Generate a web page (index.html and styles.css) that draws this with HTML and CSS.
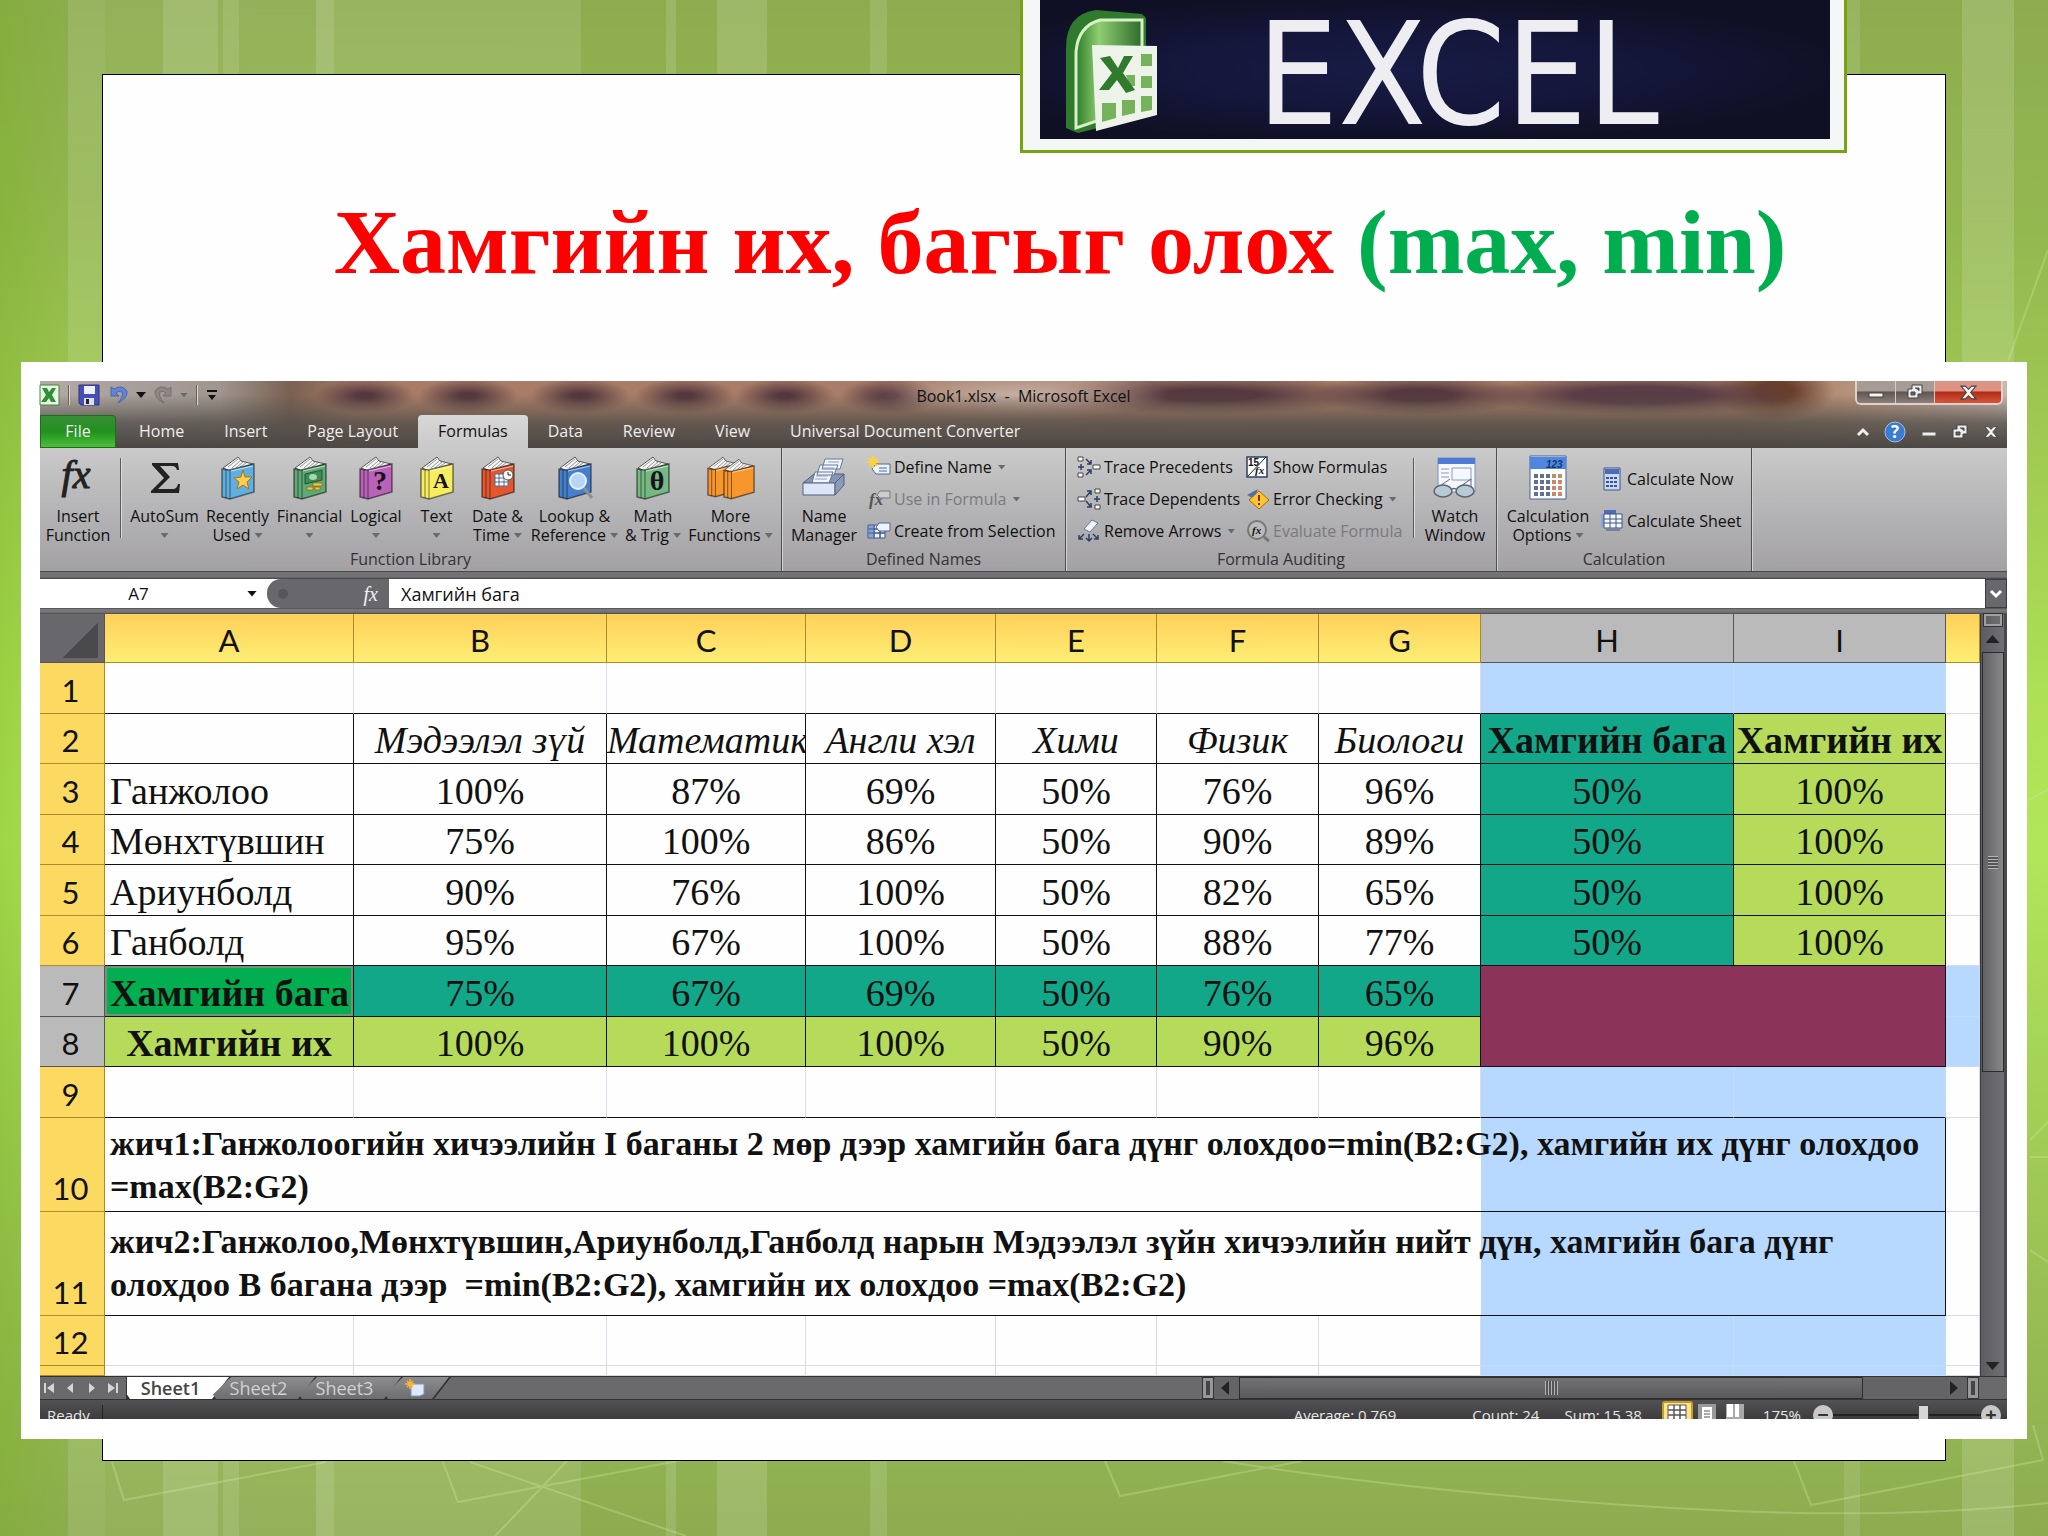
FILE: index.html
```html
<!DOCTYPE html>
<html lang="mn">
<head>
<meta charset="utf-8">
<meta name="viewport" content="width=device-width, initial-scale=1">
<title>Хамгийн их, багыг олох (max, min)</title>
<link rel="stylesheet" href="styles.css">
</head>
<body>
<svg class="defs" aria-hidden="true">
  <symbol id="book" viewBox="0 0 34 44">
    <path d="M2 12 L17 1 L20 5 L32 8 L9 15 Z" fill="#f4f4f4" stroke="#555" stroke-width="1"/>
    <path d="M7 11 L17 3 M11 12 L19 5 M15 12 L22 6 M19 11 L25 7" stroke="#999" stroke-width="1" fill="none"/>
    <path d="M1 13 L8 14 L33 8 V36 L9 43 L1 41 Z" fill="currentColor" stroke="rgba(0,0,0,.5)" stroke-width="1.5"/>
    <path d="M5 14 V42 M9 14 V43" stroke="rgba(0,0,0,.5)" stroke-width="1"/>
    <path d="M10 15 L32 10" stroke="rgba(255,255,255,.6)" stroke-width="1"/>
  </symbol>
  <symbol id="restore" viewBox="0 0 16 16">
    <path d="M5 1 H15 V10 H11 V14 H1 V5 H5 Z" fill="#eee" stroke="#444"/>
    <path d="M4 8 H8 V11 H4 Z M8 4 H12 V7" fill="#666" stroke="#444"/>
  </symbol>
  <symbol id="cross" viewBox="0 0 16 16">
    <path d="M1 2 H5 L8 5 L11 2 H15 L10 8 L15 14 H11 L8 11 L5 14 H1 L6 8 Z" fill="#f4f4f4" stroke="#444"/>
  </symbol>
</svg>

<main class="slide">
  <svg class="lines" viewBox="0 0 2048 1536" preserveAspectRatio="none" aria-hidden="true">
    <path d="M112 1462 L124 1500 L326 1462 M443 1462 L458 1502 L683 1460 M470 1462 L686 1536 M567 1461 L495 1536 M1105 1461 L1120 1496 L1302 1461 M1223 1461 Q1400 1490 1640 1506 T2048 1503 M1794 1461 L1811 1505 L2043 1460 L2033 1425 M2030 1140 L2048 1122 M2030 1157 H2048 M2030 1250 L2048 1262 M2008 361 L2048 250 M2028 800 L2048 790"/>
  </svg>

  <section class="paper">
    <h1 class="title">Хамгийн их, багыг олох <span class="title-fn">(max, min)</span></h1>

    <div class="frame">
      <div class="excel">
        <header class="chrome">
          <div class="titlebar">
            <div class="quick">
              <svg width="20" height="22" viewBox="0 0 20 22"><path d="M0 1 H19 V21 H0 Z" fill="#e9f4e6" stroke="#3c8a3a"/><path d="M2 4 H7 L9 8 L12 4 H16 L12 11 L16 18 H11 L9 14 L6 18 H1 L6 11 Z" fill="#2f8f34"/></svg>
              <i class="bar"></i>
              <svg width="22" height="22" viewBox="0 0 22 22"><path d="M1 1 H21 V21 H3 L1 19 Z" fill="#4450b8" stroke="#2c3580"/><path d="M6 2 H17 V10 H6 Z" fill="#eef"/><path d="M6 14 H16 V21 H6 Z" fill="#dde"/><path d="M8 15 H11 V20 H8 Z" fill="#223"/></svg>
              <svg width="20" height="20" viewBox="-2 0 20 20"><path d="M1 2 V11 H9 L6 8 Q9 5 12 7 Q14 11 8 18 Q18 13 17 6 Q12 -1 4 4 Z" fill="#5f86d4" stroke="#3a5aa8" stroke-width=".8"/></svg>
              <i class="caret caret-dark"></i>
              <svg width="18" height="20" viewBox="0 0 18 20"><path d="M17 2 V11 H9 L12 8 Q9 5 6 7 Q4 11 10 18 Q0 13 1 6 Q6 -1 14 4 Z" fill="#8d8683" stroke="#6d6663" stroke-width=".8"/></svg>
              <i class="caret"></i>
              <i class="bar"></i>
              <svg width="12" height="12" viewBox="0 0 12 12"><path d="M1 1 H11 V3 H1 Z M2 6 H10 L6 11 Z" fill="#111"/></svg>
            </div>
            <p class="doc">Book1.xlsx &nbsp;- &nbsp;Microsoft Excel</p>
            <div class="winbtns">
              <button class="win" aria-label="Minimize"><svg width="16" height="16" viewBox="0 0 16 16"><path d="M1 9 H15 V13 H1 Z" fill="#f4f4f4" stroke="#444"/></svg></button>
              <button class="win" aria-label="Restore"><svg width="16" height="18"><use href="#restore"/></svg></button>
              <button class="win win-close" aria-label="Close"><svg width="17" height="17"><use href="#cross"/></svg></button>
            </div>
          </div>
          <nav class="tabs">
            <button class="tab tab-file">File</button>
            <button class="tab">Home</button>
            <button class="tab">Insert</button>
            <button class="tab">Page Layout</button>
            <button class="tab tab-on">Formulas</button>
            <button class="tab">Data</button>
            <button class="tab">Review</button>
            <button class="tab">View</button>
            <button class="tab">Universal Document Converter</button>
            <div class="tabtools">
              <svg width="12" height="10" viewBox="0 0 12 10"><path d="M1 8 L6 3 L11 8" fill="none" stroke="#eee" stroke-width="3"/></svg>
              <svg width="22" height="22" viewBox="0 0 22 22"><circle cx="11" cy="11" r="10" fill="#3b7bd0" stroke="#9cc0ee"/><text x="11" y="17" class="qmark">?</text></svg>
              <svg width="16" height="16" viewBox="0 0 16 16"><path d="M1 8 H15 V12 H1 Z" fill="#eee" stroke="#555"/></svg>
              <svg width="16" height="16"><use href="#restore"/></svg>
              <svg width="16" height="14"><use href="#cross"/></svg>
            </div>
          </nav>
        </header>

        <div class="ribbon">
          <section class="group">
            <div class="tools tools-library">
              <button class="tool"><svg width="44" height="44" viewBox="0 0 44 44"><text x="20" y="32" class="fx-big">fx</text></svg><span>Insert<br>Function</span></button>
              <i class="divider"></i>
              <button class="tool"><svg width="44" height="44" viewBox="0 0 44 44"><path d="M9 7 H35 L36 14 H34 Q33 10 29 10 H17 L27 21 L15 33 H30 Q34 33 35 28 H37 L36 37 H8 V35 L21 22 L9 9 Z" fill="#222"/></svg><span>AutoSum<br><i class="caret"></i></span></button>
              <button class="tool c-blue"><svg width="44" height="44" viewBox="-5 0 44 44"><use href="#book" width="34" height="44"/><path d="M22 14 L24 21 L31 21 L26 26 L28 33 L22 29 L16 33 L18 26 L13 22 L20 21 Z" fill="#ffcf4a" stroke="#a8741a"/></svg><span>Recently<br>Used <i class="caret"></i></span></button>
              <button class="tool c-green"><svg width="44" height="44" viewBox="-5 0 44 44"><use href="#book" width="34" height="44"/><path d="M12 18 L29 14 V24 L12 28 Z" fill="#3f8a55" stroke="#1f5b33"/><ellipse cx="20" cy="21" rx="4" ry="3" fill="#a5d8ac"/><path d="M20 27 H29 V30 H20 Z M14 31 H20 V34 H14 Z M22 31 H27 V34 H22 Z" fill="#f3c545" stroke="#8a6414" stroke-width=".7"/></svg><span>Financial<br><i class="caret"></i></span></button>
              <button class="tool c-purple"><svg width="44" height="44" viewBox="-5 0 44 44"><use href="#book" width="34" height="44"/><text x="21" y="34" class="glyph">?</text></svg><span>Logical<br><i class="caret"></i></span></button>
              <button class="tool c-yellow"><svg width="44" height="44" viewBox="-5 0 44 44"><use href="#book" width="34" height="44"/><text x="21" y="32" class="glyph glyph-sm">A</text></svg><span>Text<br><i class="caret"></i></span></button>
              <button class="tool c-red"><svg width="44" height="44" viewBox="-5 0 44 44"><use href="#book" width="34" height="44"/><path d="M14 18 H27 V30 H14 Z" fill="#fff" stroke="#4a6ba8"/><path d="M14 22 H27 M14 26 H27 M18 18 V30 M23 18 V30" stroke="#4a6ba8"/><circle cx="27" cy="19" r="5" fill="#fff" stroke="#555"/><path d="M27 16 V19 H30" stroke="#222" fill="none"/></svg><span>Date &amp;<br>Time <i class="caret"></i></span></button>
              <button class="tool c-navy"><svg width="44" height="44" viewBox="-5 0 44 44"><use href="#book" width="34" height="44"/><circle cx="20" cy="25" r="8" fill="#b9d5f6" stroke="#e6eefb" stroke-width="2"/><path d="M26 32 L34 42" stroke="#8a8f9a" stroke-width="3"/></svg><span>Lookup &amp;<br>Reference <i class="caret"></i></span></button>
              <button class="tool c-leaf"><svg width="44" height="44" viewBox="-5 0 44 44"><use href="#book" width="34" height="44"/><text x="21" y="34" class="glyph">θ</text></svg><span>Math<br>&amp; Trig <i class="caret"></i></span></button>
              <button class="tool c-orange"><svg width="48" height="44" viewBox="0 0 48 44"><use href="#book" width="32" height="42"/><use href="#book" x="16" y="2" width="32" height="42"/></svg><span>More<br>Functions <i class="caret"></i></span></button>
            </div>
            <h2 class="caption">Function Library</h2>
          </section>

          <section class="group">
            <div class="tools tools-names">
              <button class="tool"><svg width="44" height="44" viewBox="0 0 44 44"><path d="M1 27 L12 18 H42 L33 29 Z" fill="#8595b5" stroke="#51607f"/><path d="M23 3 H41 L38 13 H20 Z M18 9 H36 L32 19 H15 Z M13 16 H31 L27 27 H10 Z" fill="#f3f7ff" stroke="#6478a0"/><path d="M14 20 H26 M13 23 H25 M26 6 H37 M21 12 H32" stroke="#8a9cc0"/><path d="M1 27 H33 V39 H1 Z" fill="#dbe6f8" stroke="#51607f"/><path d="M33 27 L42 18 V29 L33 39 Z" fill="#8a9ab8" stroke="#51607f"/></svg><span>Name<br>Manager</span></button>
              <div class="stack">
                <button class="item"><svg width="24" height="22" viewBox="0 0 24 22"><path d="M9 8 H23 V18 H9 L5 13 Z" fill="#eef4ff" stroke="#53678f"/><path d="M12 12 H20 M12 15 H20" stroke="#53678f"/><path d="M6 0 V12 M0 6 H12 M2 2 L10 10 M10 2 L2 10" stroke="#ffd23c" stroke-width="2"/></svg>Define Name <i class="caret"></i></button>
                <button class="item item-off"><svg width="24" height="22" viewBox="0 0 24 22"><text x="2" y="17" class="fx-small">fx</text><path d="M13 3 H23 V10 H13 L10 7 Z" fill="#ccc" stroke="#777"/></svg>Use in Formula <i class="caret"></i></button>
                <button class="item"><svg width="24" height="22" viewBox="0 0 24 22"><path d="M1 5 H18 V18 H1 Z" fill="#eef4ff" stroke="#3d5488"/><path d="M1 9 H18 M1 13 H18 M7 5 V18 M13 5 V18" stroke="#3d5488" stroke-width="1.5"/><path d="M1 5 H7 V18 H1 Z" fill="#5f7fbd" opacity=".7"/><path d="M12 3 H23 V11 H12 L9 7 Z" fill="#eef4ff" stroke="#53678f"/></svg>Create from Selection</button>
              </div>
            </div>
            <h2 class="caption">Defined Names</h2>
          </section>

          <section class="group">
            <div class="tools tools-audit">
              <div class="stack">
                <button class="item"><svg width="24" height="22" viewBox="0 0 24 22"><path d="M1 1 H6 V5 H1 Z M1 17 H6 V21 H1 Z M16 9 H23 V13 H16 Z" fill="#fff" stroke="#444"/><path d="M4 8 V14 M1 11 H7 M9 3 L14 8 M14 4 V8 H10 M9 19 L14 14 M10 14 H14 V18" stroke="#2d3f66" stroke-width="1.5" fill="none"/></svg>Trace Precedents</button>
                <button class="item"><svg width="24" height="22" viewBox="0 0 24 22"><path d="M18 1 H23 V5 H18 Z M18 17 H23 V21 H18 Z M1 9 H8 V13 H1 Z" fill="#fff" stroke="#444"/><path d="M20 8 V14 M17 11 H23 M9 9 L14 3 M10 3 H14 V7 M9 13 L14 19 M14 15 V19 H10" stroke="#2d3f66" stroke-width="1.5" fill="none"/></svg>Trace Dependents</button>
                <button class="item"><svg width="24" height="22" viewBox="0 0 24 22"><path d="M7 9 L15 0 L21 3 L13 12 Z" fill="#f4f6ff" stroke="#68759a"/><path d="M7 14 L2 19 M2 15 V19 H6 M12 14 V21 M9 18 L12 21 L15 18 M16 14 L21 19 M17 19 H21 V15" stroke="#2d3f66" stroke-width="1.5" fill="none"/></svg>Remove Arrows <i class="caret"></i></button>
              </div>
              <div class="stack">
                <button class="item"><svg width="24" height="22" viewBox="0 0 24 22"><path d="M1 1 H21 V21 H1 Z" fill="#fff" stroke="#2d3f66" stroke-width="1.5"/><text x="2" y="10" class="mini">15</text><path d="M2 20 L20 1" stroke="#222"/><text x="9" y="18" class="mini mini-fx">fx</text></svg>Show Formulas</button>
                <button class="item"><svg width="24" height="22" viewBox="0 0 24 22"><path d="M1 7 L12 1 L8 11 Z" fill="#4c6cb8"/><path d="M13 3 L23 12 L13 21 L3 12 Z" fill="#ffc52e" stroke="#a06c10"/><path d="M12 7 H14 V13 H12 Z M12 15 H14 V17 H12 Z" fill="#7a2c00"/></svg>Error Checking <i class="caret"></i></button>
                <button class="item item-off"><svg width="24" height="22" viewBox="0 0 24 22"><circle cx="11" cy="10" r="9" fill="#bbb" stroke="#777" stroke-width="2"/><text x="6" y="14" class="mini mini-fx">fx</text><path d="M18 17 L23 21" stroke="#777" stroke-width="3"/></svg>Evaluate Formula</button>
              </div>
              <i class="divider"></i>
              <button class="tool"><svg width="44" height="44" viewBox="0 0 44 44"><path d="M5 2 H42 V36 H5 Z" fill="#f5f9ff" stroke="#7a90bb"/><path d="M5 2 H42 V8 H5 Z" fill="#4d7bd6"/><path d="M8 13 H16 M8 17 H16 M8 21 H16 M19 12 H38 V24 H19 Z" stroke="#8a9ab8" fill="none"/><path d="M4 32 L17 23 M25 32 L38 23 V32" stroke="#667" fill="none"/><ellipse cx="10" cy="35" rx="9" ry="6" fill="#b7cbd6" stroke="#59656f" stroke-width="1.5"/><ellipse cx="32" cy="35" rx="9" ry="6" fill="#b7cbd6" stroke="#59656f" stroke-width="1.5"/><path d="M18 34 Q21 31 24 34" stroke="#59656f" stroke-width="1.5" fill="none"/></svg><span>Watch<br>Window</span></button>
            </div>
            <h2 class="caption">Formula Auditing</h2>
          </section>

          <section class="group">
            <div class="tools tools-calc">
              <button class="tool"><svg width="44" height="44" viewBox="0 0 44 44"><path d="M4 0 H40 V43 H4 Z" fill="#fbfcff" stroke="#44639f"/><path d="M4 1 H40 V13 H4 Z" fill="#4f86df"/><text x="20" y="12" class="mini mini-lcd">123</text><path d="M8 20 H25 M8 26 H25 M8 32 H25 M8 38 H25" stroke="#63708c" stroke-width="4" stroke-dasharray="4 2"/><path d="M26 20 H37 M26 26 H37 M26 32 H37 M26 38 H37" stroke="#c98a68" stroke-width="4" stroke-dasharray="4 2"/></svg><span>Calculation<br>Options <i class="caret"></i></span></button>
              <div class="stack stack-two">
                <button class="item"><svg width="24" height="24" viewBox="0 0 24 24"><path d="M4 1 H20 V23 H4 Z" fill="#c9d8f4" stroke="#3d5488"/><path d="M5 2 H19 V7 H5 Z" fill="#4c6cb8"/><path d="M6 11 H18 M6 15 H18 M6 19 H18" stroke="#3d5488" stroke-width="2" stroke-dasharray="3 1"/></svg>Calculate Now</button>
                <button class="item"><svg width="24" height="24" viewBox="0 0 24 24"><path d="M4 1 H16 V6 H4 Z" fill="#4c6cb8"/><path d="M1 5 H5 V18 H1 Z" fill="#8aa4d6"/><path d="M4 5 H22 V19 H4 Z" fill="#f5f9ff" stroke="#3d5488"/><path d="M4 10 H22 M4 14 H22 M10 5 V19 M16 5 V19 M6 21 H20" stroke="#3d5488"/></svg>Calculate Sheet</button>
              </div>
            </div>
            <h2 class="caption">Calculation</h2>
          </section>
        </div>

        <div class="formula">
          <div class="namewrap">
            <input class="namebox" aria-label="Name Box" value="A7">
            <i class="caret caret-dark"></i>
          </div>
          <div class="fxzone"><i class="knob"></i><span class="fx">fx</span></div>
          <input class="fxinput" aria-label="Formula Bar" value="Хамгийн бага">
          <button class="expand" aria-label="Expand Formula Bar"><svg width="14" height="10" viewBox="0 0 14 10"><path d="M2 2 L7 7 L12 2" fill="none" stroke="#fff" stroke-width="3"/></svg></button>
        </div>

        <div class="work">
          <table class="grid">
            <colgroup><col class="w-n"><col class="w-a"><col class="w-b"><col class="w-c"><col class="w-d"><col class="w-e"><col class="w-f"><col class="w-g"><col class="w-h"><col class="w-i"><col></colgroup>
            <thead>
              <tr><th class="corner"></th><th>A</th><th>B</th><th>C</th><th>D</th><th>E</th><th>F</th><th>G</th><th class="sel">H</th><th class="sel">I</th><th></th></tr>
            </thead>
            <tbody>
              <tr class="above"><th>1</th><td></td><td></td><td></td><td></td><td></td><td></td><td></td><td class="pick"></td><td class="pick"></td><td></td></tr>
              <tr class="box names"><th>2</th><td></td><td>Мэдээлэл зүй</td><td>Математик</td><td>Англи хэл</td><td>Хими</td><td>Физик</td><td>Биологи</td><td class="low head">Хамгийн бага</td><td class="high head">Хамгийн их</td><td></td></tr>
              <tr class="box"><th>3</th><td>Ганжолоо</td><td>100%</td><td>87%</td><td>69%</td><td>50%</td><td>76%</td><td>96%</td><td class="low">50%</td><td class="high">100%</td><td></td></tr>
              <tr class="box"><th>4</th><td>Мөнхтүвшин</td><td>75%</td><td>100%</td><td>86%</td><td>50%</td><td>90%</td><td>89%</td><td class="low">50%</td><td class="high">100%</td><td></td></tr>
              <tr class="box"><th>5</th><td>Ариунболд</td><td>90%</td><td>76%</td><td>100%</td><td>50%</td><td>82%</td><td>65%</td><td class="low">50%</td><td class="high">100%</td><td></td></tr>
              <tr class="box"><th>6</th><td>Ганболд</td><td>95%</td><td>67%</td><td>100%</td><td>50%</td><td>88%</td><td>77%</td><td class="low">50%</td><td class="high">100%</td><td></td></tr>
              <tr class="box"><th class="sel">7</th><td class="active">Хамгийн бага</td><td class="low">75%</td><td class="low">67%</td><td class="low">69%</td><td class="low">50%</td><td class="low">76%</td><td class="low">65%</td><td class="merged" colspan="2" rowspan="2"></td><td class="pick"></td></tr>
              <tr class="box"><th class="sel">8</th><td class="high head total">Хамгийн их</td><td class="high">100%</td><td class="high">100%</td><td class="high">100%</td><td class="high">50%</td><td class="high">90%</td><td class="high">96%</td><td class="pick"></td></tr>
              <tr class="above"><th>9</th><td></td><td></td><td></td><td></td><td></td><td></td><td></td><td class="pick"></td><td class="pick"></td><td></td></tr>
              <tr class="note"><th>10</th><td colspan="9">жич1:Ганжолоогийн хичээлийн I баганы 2 мөр дээр хамгийн бага дүнг олохдоо=min(B2:G2), хамгийн их дүнг олохдоо =max(B2:G2)</td><td></td></tr>
              <tr class="note note-tall"><th>11</th><td colspan="9">жич2:Ганжолоо,Мөнхтүвшин,Ариунболд,Ганболд нарын Мэдээлэл зүйн хичээлийн нийт дүн, хамгийн бага дүнг<br>олохдоо B багана дээр &nbsp;=min(B2:G2), хамгийн их олохдоо =max(B2:G2)</td><td></td></tr>
              <tr><th>12</th><td></td><td></td><td></td><td></td><td></td><td></td><td></td><td class="pick"></td><td class="pick"></td><td></td></tr>
              <tr class="sliver"><th></th><td></td><td></td><td></td><td></td><td></td><td></td><td></td><td class="pick"></td><td class="pick"></td><td></td></tr>
            </tbody>
          </table>
          <div class="vscroll">
            <i class="split"></i>
            <i class="arrow arrow-up"></i>
            <div class="vthumb"><i class="grip"></i></div>
            <i class="arrow arrow-down"></i>
          </div>
        </div>

        <div class="sheets">
          <div class="sheetnav">
            <svg width="12" height="12" viewBox="0 0 12 12"><path d="M1 1 H3 V11 H1 Z M11 1 V11 L4 6 Z"/></svg>
            <svg width="12" height="12" viewBox="0 0 12 12"><path d="M9 1 V11 L3 6 Z"/></svg>
            <svg width="12" height="12" viewBox="0 0 12 12"><path d="M3 1 V11 L9 6 Z"/></svg>
            <svg width="12" height="12" viewBox="0 0 12 12"><path d="M1 1 V11 L8 6 Z M9 1 H11 V11 H9 Z"/></svg>
          </div>
          <div class="tabstrip">
            <button class="sheet sheet-on">Sheet1</button>
            <button class="sheet">Sheet2</button>
            <button class="sheet">Sheet3</button>
            <button class="sheet sheet-new" aria-label="Insert Worksheet"><svg width="20" height="18" viewBox="0 0 20 18"><path d="M6 5 H19 V15 L15 17 H6 Z" fill="#dfe9fb" stroke="#7d93c0"/><path d="M5 0 V10 M0 5 H10 M2 2 L8 8 M8 2 L2 8" stroke="#ffb52c" stroke-width="1.5"/></svg></button>
          </div>
          <div class="hscroll">
            <i class="hsplit"></i>
            <i class="arrow arrow-left"></i>
            <div class="hthumb"><i class="grip grip-h"></i></div>
            <i class="arrow arrow-right"></i>
            <i class="hsplit"></i>
          </div>
        </div>

        <footer class="status">
          <div class="statusrow">
            <span class="ready">Ready</span>
            <span class="average">Average: 0.769</span>
            <span class="count">Count: 24</span>
            <span class="sum">Sum: 15.38</span>
            <button class="view view-on" aria-label="Normal"><svg width="20" height="22" viewBox="0 0 20 22"><path d="M1 1 H19 V21 H1 Z" fill="#fff" stroke="#555"/><path d="M1 6 H19 M1 11 H19 M1 16 H19 M7 1 V21 M13 1 V21" stroke="#555" stroke-width="1.5"/></svg></button>
            <button class="view" aria-label="Page Layout"><svg width="18" height="22" viewBox="0 0 18 22"><path d="M0 0 H18 V22 H0 Z" fill="#999"/><path d="M4 3 H14 V21 H4 Z" fill="#fff"/><path d="M6 7 H12 M6 10 H12 M6 13 H12" stroke="#555"/></svg></button>
            <button class="view" aria-label="Page Break Preview"><svg width="18" height="22" viewBox="0 0 18 22"><path d="M0 0 H18 V22 H0 Z" fill="#aaa"/><path d="M1 0 H7 V13 H1 Z M9 0 H13 V13 H9 Z" fill="#fff"/></svg></button>
            <span class="percent">175%</span>
            <button class="round" aria-label="Zoom Out">−</button>
            <input class="zoom" type="range" min="0" max="100" value="62" aria-label="Zoom">
            <button class="round" aria-label="Zoom In">+</button>
          </div>
        </footer>
      </div>
    </div>
  </section>

  <div class="logo">
    <div class="logo-pic">
      <svg width="98" height="128" viewBox="0 0 98 128" aria-hidden="true">
        <defs><linearGradient id="lg" x1="0" x2="1"><stop offset="0" stop-color="#2e7d2a"/><stop offset=".35" stop-color="#8fce70"/><stop offset="1" stop-color="#2d6b2c"/></linearGradient></defs>
        <path d="M4 122 V42 Q4 8 34 4 L80 8 L84 12 V110 L16 127 Z" fill="#2f7a2c"/>
        <path d="M14 122 V46 Q16 20 38 14 H80 V100 Z" fill="url(#lg)" stroke="#d7f0c8" stroke-width="3"/>
        <path d="M30 39 L95 40 V109 L34 125 Z" fill="#eef3ea"/>
        <path d="M79 48 H90 V60 H79 Z M79 70 H90 V82 H79 Z M79 90 H90 V104 L79 106 Z M60 94 H73 V107 L60 110 Z M40 97 H54 V112 L40 116 Z M64 69 H73 V80 H68 Z" fill="#76b25c"/>
        <path d="M38 52 L48 50 L56 62 L62 50 H71 L61 67 L73 84 L64 87 L55 74 L47 84 H37 L50 67 Z" fill="#2f7a2c"/>
      </svg>
      <span class="logo-word">EXCEL</span>
    </div>
  </div>
</main>
</body>
</html>
```
FILE: styles.css
```css
* { box-sizing: border-box; }

body {
  margin: 0;
  background: #98be56;
  font-family: "Open Sans", "Noto Sans", sans-serif;
  font-size: 16px;
  color: #111;
}

h1, h2, p { margin: 0; font-weight: 400; }

button, input {
  margin: 0;
  padding: 0;
  border: 0;
  background: none;
  font: inherit;
  color: inherit;
}

i { display: block; flex: none; }
svg { display: block; flex: none; overflow: visible; }
.defs { position: absolute; width: 0; height: 0; }

/* Slide background */
.slide {
  position: relative;
  min-height: 100vh;
  padding: 74px 102px 74px;
  overflow: hidden;
  background:
    linear-gradient(to right,
      rgba(110, 175, 20, .3) 0, rgba(110, 175, 20, .05) 68px,
      rgba(255, 255, 255, .1) 68px 105px, rgba(255, 255, 255, .06) 105px 163px,
      rgba(255, 255, 255, .18) 163px 218px, rgba(255, 255, 255, .06) 218px 223px,
      rgba(255, 255, 255, .16) 223px 239px, rgba(255, 255, 255, .06) 239px 316px,
      rgba(255, 255, 255, .2) 316px 334px, rgba(255, 255, 255, .1) 334px 581px,
      transparent 581px 666px, rgba(255, 255, 255, .12) 666px 676px,
      transparent 676px 717px, rgba(255, 255, 255, .14) 717px 767px,
      transparent 767px 870px, rgba(255, 255, 255, .12) 870px 887px,
      transparent 887px 1844px, rgba(255, 255, 255, .1) 1844px 1860px,
      transparent 1860px 1962px, rgba(255, 255, 255, .14) 1962px 2014px,
      transparent 2014px),
    linear-gradient(to bottom, #8dac4f 0, #94b850 15%, #aedf55 45%, #b2e65a 55%, #98be54 85%, #8dac50 100%);
}

.lines {
  position: absolute;
  inset: 0;
  width: 100%;
  height: 100%;
  fill: none;
  stroke: rgba(220, 245, 180, .28);
  stroke-width: 2;
}

.paper {
  position: relative;
  padding: 115px 0 21px;
  border: 1px solid #000;
  background: #fefefe;
}

.title {
  margin-bottom: 68px;
  padding-left: 72px;
  font: bold 92px/104px "Liberation Serif", serif;
  text-align: center;
  color: #fe0000;
}
.title-fn { color: #00ae50; }

/* Logo plate hanging from the top edge */
.logo {
  position: absolute;
  top: 0;
  right: 201px;
  width: 827px;
  padding: 0 14px 11px 17px;
  border: 3px solid #76a30f;
  border-top: 0;
  background: #f5f6f6;
}
.logo-pic {
  display: flex;
  align-items: center;
  gap: 97px;
  height: 139px;
  padding-left: 22px;
  background: radial-gradient(ellipse at 45% 50%, #181b45 0, #14163a 40%, #101024 75%);
}
.logo-word {
  padding-top: 10px;
  font: 143px/132px "DejaVu Sans Condensed", "DejaVu Sans", sans-serif;
  color: #eeeef2;
}

/* Excel window */
.frame {
  margin: 0 -82px;
  padding: 19px 20px 20px 19px;
  background: #fff;
}
.excel { background: #5f5f62; }

.chrome {
  background:
    linear-gradient(to bottom, transparent 20%, rgba(84, 80, 74, .8) 62%, #4b4744 100%),
    radial-gradient(ellipse 150px 26px at 980px 14px, #c4b0a6 0, transparent 100%),
    radial-gradient(ellipse 50px 18px at 325px 15px, #54363e 15%, transparent 100%),
    radial-gradient(ellipse 50px 18px at 428px 15px, #54363e 15%, transparent 100%),
    radial-gradient(ellipse 50px 18px at 540px 15px, #54363e 15%, transparent 100%),
    radial-gradient(ellipse 50px 18px at 645px 15px, #54363e 15%, transparent 100%),
    radial-gradient(ellipse 50px 18px at 745px 15px, #54363e 15%, transparent 100%),
    radial-gradient(ellipse 50px 18px at 850px 15px, #54363e 15%, transparent 100%),
    radial-gradient(ellipse 170px 20px at 1170px 14px, #563940 30%, transparent 100%),
    radial-gradient(ellipse 110px 20px at 1380px 14px, #563940 30%, transparent 100%),
    radial-gradient(ellipse 170px 20px at 1600px 14px, #5a3d46 40%, transparent 100%),
    radial-gradient(ellipse 60px 30px at 1735px 10px, #6a3f29 30%, transparent 100%),
    linear-gradient(to right, #b3aaa6 0, #a0958f 180px, #7a6152 250px, #a87c66 320px, #a97e68 1100px, #a87c64 1700px, #b48f78 1800px, #c9b8b0 100%);
}

.titlebar {
  display: grid;
  grid-template-columns: 1fr auto 1fr;
  height: 32px;
}
.quick {
  display: flex;
  align-items: center;
  gap: 8px;
  height: 28px;
}
.bar { width: 2px; height: 20px; background: #ddd5d0; border-left: 1px solid #6b605a; }
.doc { line-height: 30px; }
.winbtns {
  display: flex;
  justify-self: end;
  align-self: start;
  margin-right: 4px;
  border: 2px solid #e0d2ca;
  border-top: 0;
  border-radius: 0 0 6px 6px;
  overflow: hidden;
}
.win {
  display: flex;
  align-items: center;
  justify-content: center;
  width: 39px;
  height: 22px;
  border-right: 1px solid #d8ccc6;
  background: linear-gradient(#a89a94 0 45%, #5f5552 50%, #8c807b);
}
.win-close { width: 66px; border: 0; background: linear-gradient(#dd9484 0 45%, #b32a17 50%, #d5563c); }

.tabs {
  display: flex;
  align-items: end;
  height: 35px;
  color: #eee;
}
.tab { height: 33px; padding: 0 20px; line-height: 33px; white-space: nowrap; }
.tab-file {
  width: 76px;
  margin-right: 3px;
  border-radius: 0 4px 0 0;
  background: linear-gradient(#3a8f38, #219020 50%, #4fc23c);
  box-shadow: inset 0 0 0 1px #1f6d1d;
}
.tab-on {
  border-radius: 4px 4px 0 0;
  background: linear-gradient(#d8d8d8, #c9c9c9);
  color: #111;
}
.tabtools {
  display: flex;
  align-items: center;
  gap: 15px;
  height: 33px;
  margin-left: auto;
  padding-right: 8px;
}
.qmark { font: bold 17px "Open Sans", sans-serif; text-anchor: middle; fill: #fff; }

.caret {
  display: inline-block;
  width: 8px;
  height: 5px;
  vertical-align: 3px;
  background: #6a6a6a;
  clip-path: polygon(0 0, 100% 0, 50% 100%);
}
.caret-dark { width: 10px; height: 6px; background: #111; }

/* Ribbon */
.ribbon {
  display: flex;
  height: 124px;
  border-bottom: 1px solid #4a4a4c;
  background: linear-gradient(#cacaca, #b5b4b6 50%, #a3a1a4);
}
.group {
  display: flex;
  flex-direction: column;
  border-right: 1px solid #4f4f52;
  box-shadow: 1px 0 0 #d2d2d2;
}
.tools { display: grid; flex: 1; padding-top: 8px; }
.tools-library { grid-template-columns: 76px 11px 75px 71px 73px 60px 61px 61px 93px 64px 91px; padding-right: 5px; }
.tools-names { grid-template-columns: 84px 199px; }
.tools-audit { grid-template-columns: 169px 164px 8px 76px; padding-left: 10px; padding-right: 3px; }
.tools-calc { grid-template-columns: 102px 152px; }
.tool {
  display: flex;
  flex-direction: column;
  align-items: center;
  justify-content: start;
  gap: 7px;
  line-height: 19px;
  white-space: nowrap;
}
.divider {
  width: 2px;
  height: 80px;
  margin: 2px 0 0 4px;
  border-left: 1px solid #5a5a5c;
  background: #dcdcdc;
}
.stack { display: flex; flex-direction: column; padding-left: 1px; gap: 10px; }
.stack-two { gap: 20px; padding-top: 12px; }
.item {
  display: flex;
  align-items: center;
  gap: 3px;
  height: 22px;
  white-space: nowrap;
}
.item .caret { margin-left: 3px; }
.item-off { color: #7a7a7c; }
.caption { height: 24px; font-size: 16px; line-height: 24px; text-align: center; color: #333; }

.c-blue svg { color: #5fb0e0; }
.c-green svg { color: #5fa878; }
.c-purple svg { color: #b862b8; }
.c-yellow svg { color: #f6ee60; }
.c-red svg { color: #e4572e; }
.c-navy svg { color: #4580cc; }
.c-leaf svg { color: #74b882; }
.c-orange svg { color: #f7962c; }
.fx-big { font: italic 40px "Liberation Serif", serif; text-anchor: middle; fill: #222; stroke: #222; }
.fx-small { font: italic bold 17px "Liberation Serif", serif; fill: #555; }
.glyph { font: bold 28px "Liberation Serif", serif; text-anchor: middle; fill: #1a1020; }
.glyph-sm { font-size: 22px; }
.mini { font: bold 10px "Liberation Sans", sans-serif; fill: #111; }
.mini-fx { font: italic bold 11px "Liberation Serif", serif; }
.mini-lcd { font-style: italic; fill: #16356f; }

/* Formula bar */
.formula {
  display: flex;
  align-items: center;
  height: 42px;
  padding: 7px 0 6px;
  background: linear-gradient(#727275 0 5px, #3f3f42 7px 36px, #77777a 37px 40px, #48484b);
}
.namewrap {
  display: flex;
  align-items: center;
  width: 243px;
  height: 29px;
  background: #fff;
}
.namebox { width: 207px; height: 29px; padding-right: 10px; text-align: center; font-size: 17px; }
.fxzone {
  display: flex;
  align-items: center;
  justify-content: space-between;
  width: 122px;
  height: 29px;
  margin-left: -16px;
  padding: 0 11px;
  border-radius: 14px 0 0 14px;
  background: #68686c;
}
.knob { width: 10px; height: 10px; border-radius: 50%; background: #55555a; }
.fx { font: italic 20px/24px "Liberation Serif", serif; color: #f2f2f2; }
.fxinput { flex: 1; min-width: 0; height: 29px; padding: 0 12px; background: #fff; font-size: 18px; }
.expand {
  display: flex;
  align-items: center;
  justify-content: center;
  width: 22px;
  height: 29px;
  background: #68686c;
  border: 1px solid #3c3c40;
}

/* Worksheet */
.work { display: flex; background: #fff; }
.grid {
  flex: 1;
  width: 0;
  table-layout: fixed;
  border-collapse: separate;
  border-spacing: 0;
  background: #fefefe;
  font-family: "Liberation Serif", serif;
  font-size: 38px;
  line-height: 40px;
}
.w-n { width: 65px; }
.w-a { width: 249px; }
.w-b { width: 253px; }
.w-c { width: 199px; }
.w-d { width: 190px; }
.w-e { width: 161px; }
.w-f { width: 162px; }
.w-g { width: 162px; }
.w-h { width: 253px; }
.w-i { width: 212px; }

.grid th {
  padding: 0 0 4px;
  border-right: 1px solid #b0892a;
  border-bottom: 1px solid #b0892a;
  background: #fcda62;
  font: 31px/36px Lato, "Open Sans", sans-serif;
  vertical-align: bottom;
}
.grid tbody th { padding-right: 3px; padding-bottom: 5px; }
.grid thead th { height: 49px; background: linear-gradient(#ffd05a, #fdee74); }
.grid .sel, .grid thead .sel { background: #bababa; border-color: #55555a; }
.grid thead .corner {
  border-color: #55555a;
  background: linear-gradient(to bottom right, transparent 50%, #4a4a4c 50%) 22px 8px / 36px 36px no-repeat #68686c;
}
.grid td {
  padding: 0 0 3px;
  border-right: 1px solid #d9dbe0;
  border-bottom: 1px solid #d9dbe0;
  overflow: hidden;
  white-space: nowrap;
  text-align: center;
  vertical-align: bottom;
}
.grid td:nth-child(2) { padding-left: 5px; text-align: left; }
.grid tbody tr { height: 51px; }
.grid tbody tr:nth-child(even) { height: 50px; }
.above td:not(:last-child) { border-bottom-color: #111; }
.box td:not(:last-child) { border-color: #111; }
.names { font-style: italic; }
.grid .head { font-style: normal; font-weight: 700; }
.grid .low { background: #13a78a; }
.grid .high { background: #b6db5a; }
.grid .merged { background: #8b3359; }
.grid td.active { background: #02af50; font-weight: 700; box-shadow: inset 0 0 0 2px #7c8f7c; }
.grid td.total { padding-left: 0; text-align: center; }
.grid .pick { background: #b7d9ff; border-color: #c4dcf4; }
.above .pick { border-bottom-color: #111; }
.grid tbody tr.note { height: 94px; }
.grid tbody tr.note-tall { height: 104px; }
.grid .note td:nth-child(2) {
  padding: 4px 12px 0 5px;
  border-color: #111;
  background: linear-gradient(to right, transparent calc(100% - 464px), #b7d9ff 0);
  font-size: 34px;
  font-weight: 700;
  line-height: 43px;
  white-space: normal;
  vertical-align: top;
}
.grid .note-tall td:nth-child(2) { padding-top: 8px; }
.grid tbody tr.sliver { height: 10px; }
.grid .sliver th { padding: 0; }

.vscroll {
  display: flex;
  flex-direction: column;
  align-items: center;
  width: 27px;
  padding-bottom: 6px;
  border-right: 3px solid #4a4a4d;
  border-left: 1px solid #3c3c40;
  background: linear-gradient(to right, #5c5c60, #707074);
}
.split { width: 18px; height: 12px; border: 2px solid #a0a0a4; outline: 1px solid #333; }
.vthumb {
  display: flex;
  align-items: center;
  justify-content: center;
  width: 22px;
  height: 420px;
  margin-bottom: auto;
  border: 1px solid #2c2c2e;
  background: linear-gradient(to right, #626264, #87878a);
}
.grip { width: 10px; height: 13px; background: repeating-linear-gradient(#b4b4b6 0 1px, #555 1px 3px); }
.grip-h { width: 13px; height: 14px; background: repeating-linear-gradient(to right, #b4b4b6 0 1px, #555 1px 3px); }
.arrow { width: 14px; height: 8px; background: #222; }
.arrow-up { margin: 9px 0; clip-path: polygon(50% 0, 100% 100%, 0 100%); }
.arrow-down { clip-path: polygon(0 0, 100% 0, 50% 100%); }
.arrow-left { width: 8px; height: 14px; margin: 0 10px 0 7px; clip-path: polygon(100% 0, 100% 100%, 0 50%); }
.arrow-right { width: 8px; height: 14px; margin: 0 9px 0 auto; clip-path: polygon(0 0, 100% 50%, 0 100%); }

/* Sheet tabs */
.sheets {
  display: flex;
  height: 24px;
  border-top: 1px solid #333;
  border-bottom: 1px solid #333;
  background: #6a696c;
}
.sheetnav {
  display: flex;
  align-items: center;
  justify-content: space-between;
  width: 87px;
  padding: 0 7px 0 3px;
  border-right: 1px solid #333;
  fill: #d5d5d7;
}
.tabstrip {
  display: flex;
  background: #2f2f31;
  clip-path: polygon(0 0, 100% 0, calc(100% - 17px) 100%, 0 100%);
}
.sheet {
  width: 102px;
  margin-right: -16px;
  padding-right: 11px;
  background: linear-gradient(#8d8d90, #6d6d70);
  clip-path: polygon(18px 0, 100% 0, calc(100% - 17px) 100%, 3px 100%, 0 80%);
  font-size: 18px;
  line-height: 21px;
  color: #d0d0d2;
}
.sheet-on {
  padding-right: 15px;
  background: #fff;
  clip-path: polygon(0 0, 100% 0, calc(100% - 17px) 100%, 3px 100%, 0 80%);
  font-weight: 600;
  color: #444;
}
.sheet-new { width: 64px; margin-right: 2px; padding-left: 20px; }
.hscroll {
  display: flex;
  align-items: center;
  width: 777px;
  margin-left: auto;
  margin-right: 28px;
  background: #646467;
}
.hsplit { width: 12px; height: 22px; border: 4px solid #98989b; outline: 1px solid #333; outline-offset: -1px; background: #444; }
.hthumb {
  display: flex;
  align-items: center;
  justify-content: center;
  width: 624px;
  height: 22px;
  border: 1px solid #2c2c2e;
  background: linear-gradient(#727275, #59595c);
}

/* Status bar, cut off by the bottom edge of the window */
.status {
  height: 19px;
  overflow: hidden;
  background: linear-gradient(#525154, #3e3c3f);
  color: #e6e6e6;
  font-size: 15px;
}
.statusrow {
  display: flex;
  align-items: center;
  height: 29px;
  padding: 0 6px 0 7px;
}
.ready { margin-right: auto; padding-right: 12px; border-right: 1px solid #222; }
.average { margin-right: 76px; }
.count { margin-right: 25px; }
.sum { margin-right: 20px; }
.view { display: flex; align-items: center; justify-content: center; width: 28px; height: 28px; }
.view-on { width: 31px; border-radius: 3px; border: 2px solid #c79a25; background: #ffe48a; }
.percent { margin: 0 12px 0 14px; }
.round {
  width: 20px;
  height: 20px;
  border-radius: 50%;
  background: #c8c8ca;
  font: bold 20px/18px "Open Sans", sans-serif;
  color: #333;
}
.zoom {
  appearance: none;
  width: 148px;
  height: 20px;
  background: linear-gradient(#222, #222) center / 100% 2px no-repeat;
}
.zoom::-webkit-slider-thumb {
  appearance: none;
  width: 11px;
  height: 20px;
  border: 1px solid #444;
  border-radius: 1px 1px 5px 5px;
  background: #d6d6d8;
}
```
